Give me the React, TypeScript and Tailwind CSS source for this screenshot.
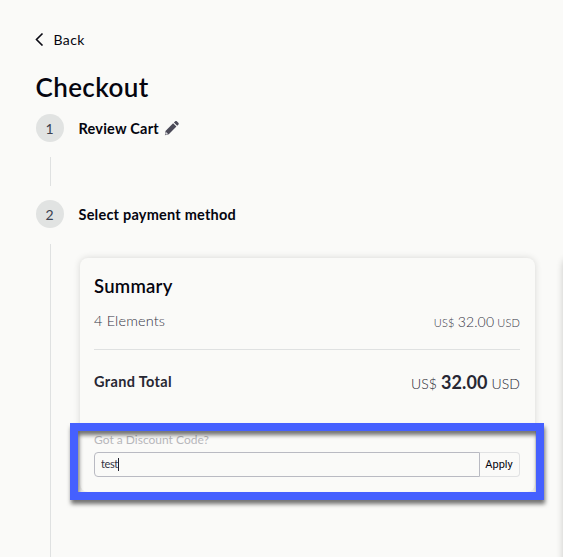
import { useState } from 'react';
import type { ReactNode } from 'react';

interface StepProps {
  number: number;
  title: string;
  icon?: ReactNode;
}

const BackIcon = () => (
  <svg width="10" height="14" viewBox="0 0 10 14" fill="none" stroke="#0b0b14" strokeWidth="1.6">
    <path d="M7.5 1.5 1.5 7.5l6 6" />
  </svg>
);

const PencilIcon = () => (
  <svg width="15" height="16" viewBox="0 0 15 16" fill="#4b4a58">
    <path d="m1.5 10.9 7.6-7.6 3.3 3.3-7.6 7.6-3.9 1z" />
    <path d="m9.9 2.5 1.1-1.1c.6-.6 1.4-.6 2 0l1.3 1.3c.6.6.6 1.4 0 2l-1.1 1.1z" />
    <path d="m1.8 11.8 2.3 2.3-2.2.6-.7-.7z" fill="#d8d8dc" />
  </svg>
);

const Step = ({ number, title, icon }: StepProps) => (
  <div className="flex h-7 items-center">
    <span className="flex size-7 items-center justify-center rounded-full bg-[#e1e3e2] text-[14px] text-[#3c4150]">
      {number}
    </span>
    <h2 className="ml-[15px] text-[14.5px] font-bold leading-[21px] tracking-[0.22px] text-[#05050f]">{title}</h2>
    {icon && <span className="ml-[5.5px]">{icon}</span>}
  </div>
);

const App = () => {
  const [code, setCode] = useState('test');

  return (
    <div className="h-[557px] w-[563px] overflow-hidden bg-[#fafaf8] font-['Lato',sans-serif] text-[#05050f]">
      <div className="flex h-full flex-col pl-[35.5px] pt-[29px]">
        <button className="-ml-px flex h-5 items-center gap-[9px] self-start text-[14px] tracking-[0.4px]">
          <BackIcon />
          Back
        </button>
        <h1 className="mt-[23px] h-[30px] text-[26px] font-semibold leading-[30px] tracking-[0.4px]">Checkout</h1>
        <div className="mt-3">
          <Step number={1} title="Review Cart" icon={<PencilIcon />} />
        </div>
        <div className="ml-[14.5px] mt-[15px] h-[29px] w-px shrink-0 bg-[#dfe1e1]" />
        <div className="mt-[14px]">
          <Step number={2} title="Select payment method" />
        </div>
        <div className="mt-4 flex grow">
          <div className="ml-[14.5px] w-px shrink-0 bg-[#dfe1e1]" />
          <div className="ml-[29px] mt-[14px] flex shrink-0 gap-7">
            <section className="relative h-[234px] w-[455px] rounded-lg pl-[14px] pr-[15px] pt-4 shadow-[0_0_7px_rgba(0,0,0,0.14)]">
              <h3 className="h-6 text-[18.5px] font-semibold leading-6 tracking-[0.25px]">Summary</h3>
              <div className="mt-[11px] flex h-6 items-center justify-between text-[14px] font-light text-[#343444]">
                <span className="text-[14.5px] tracking-[0.15px]">4 Elements</span>
                <span className="text-[11px] tracking-[0.15px]">
                  US$ <span className="text-[14px]">32.00</span> USD
                </span>
              </div>
              <div className="mt-4 h-px bg-[#dfe1e1]" />
              <div className="mt-5 flex h-6 items-center justify-between text-[#272733]">
                <span className="text-[14.5px] font-bold tracking-[0.35px]">Grand Total</span>
                <span className="text-[14px] font-light tracking-[0.1px]">
                  US$ <span className="text-[18px] font-bold">32.00</span> USD
                </span>
              </div>
              <label htmlFor="code" className="mt-[38px] block h-4 text-[12px] leading-4 text-[#b7b7bb]">
                Got a Discount Code?
              </label>
              <div className="mt-1 flex h-[25px] text-[11px]">
                <div className="flex w-[386px] items-center rounded-l border border-[#b9bac2] pl-[6px] text-[#343444]">
                  <input
                    id="code"
                    value={code}
                    onChange={(e) => setCode(e.target.value)}
                    className="w-[17px] tracking-[-0.4px] outline-none"
                  />
                  <span className="h-[13px] w-px bg-[#20202c]" />
                </div>
                <button className="w-10 rounded-r border border-l-0 border-[#e1e2e3] pr-px pt-px font-['Roboto',sans-serif]">
                  Apply
                </button>
              </div>
              <div className="pointer-events-none absolute -left-[10px] top-[165px] h-[77px] w-[474px] border-8 border-[#4560ff] drop-shadow-[1px_4px_2px_rgba(0,0,0,0.55)]" />
            </section>
            <section className="h-[400px] w-[300px] rounded-lg shadow-[0_0_7px_rgba(0,0,0,0.2)]" />
          </div>
        </div>
      </div>
    </div>
  );
};

export default App;
